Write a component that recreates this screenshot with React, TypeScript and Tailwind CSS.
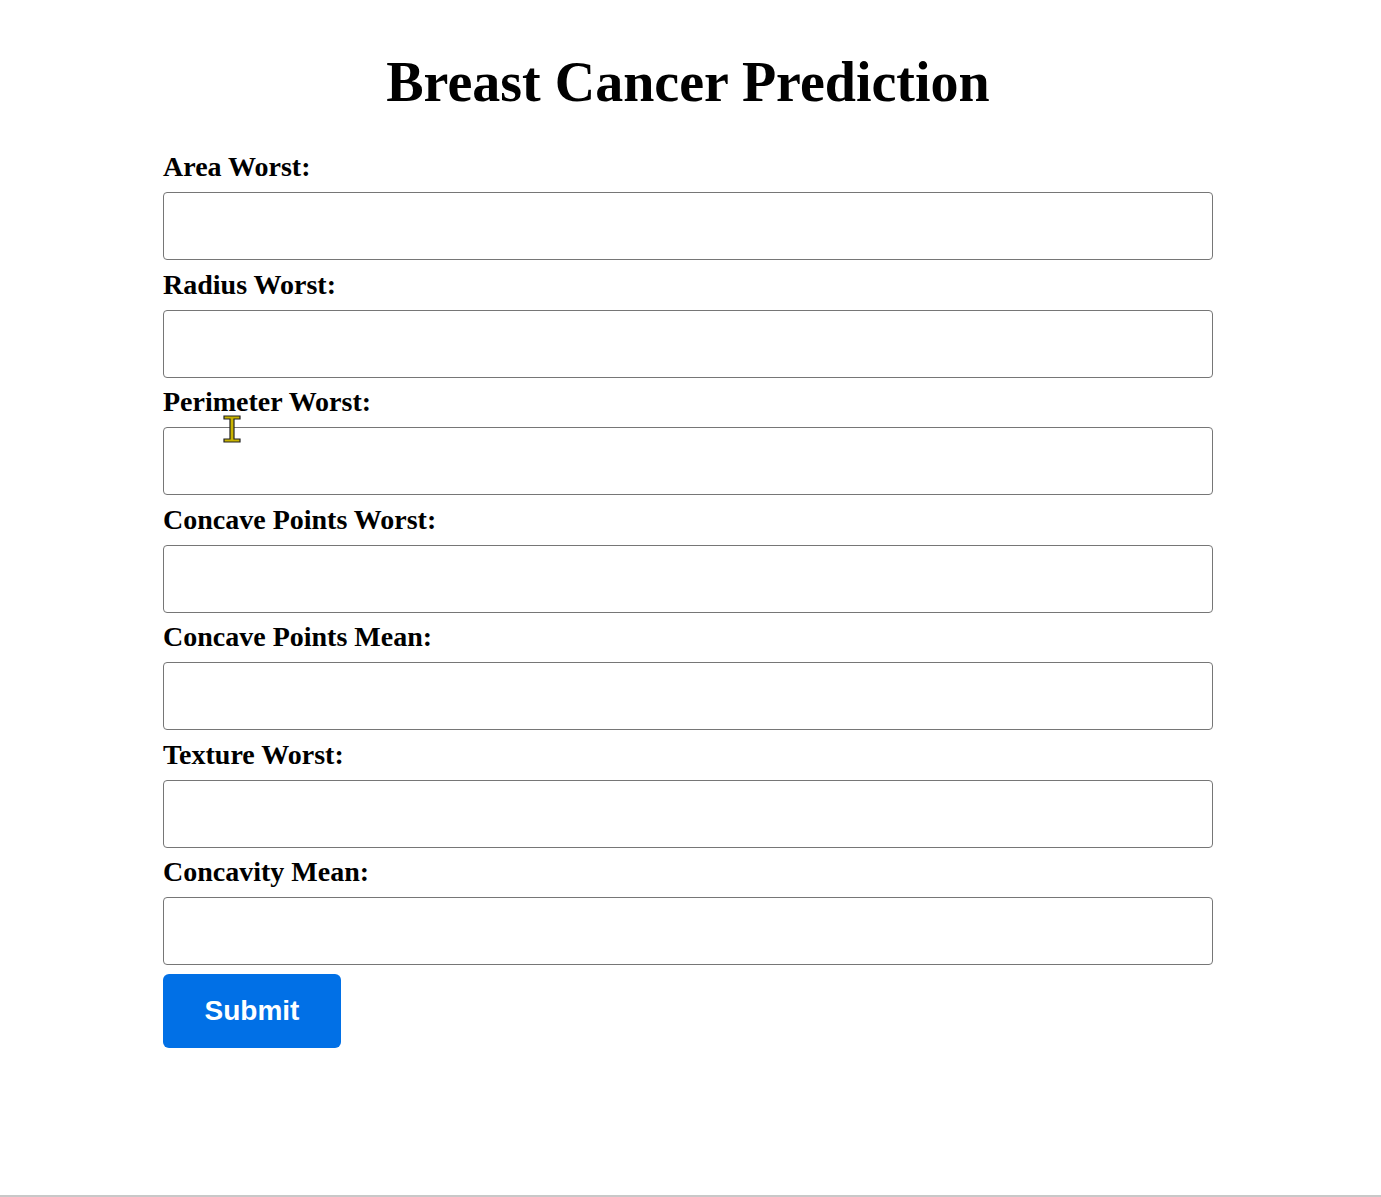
import React from "react";

const fields = [
  "Area Worst:",
  "Radius Worst:",
  "Perimeter Worst:",
  "Concave Points Worst:",
  "Concave Points Mean:",
  "Texture Worst:",
  "Concavity Mean:",
];

function TextCursor() {
  // mouse I-beam left in the capture
  return (
    <svg
      className="absolute left-[223px] top-[415px] pointer-events-none"
      width="18"
      height="28"
      viewBox="0 0 18 28"
    >
      <path
        d="M1 1h16v3h-6v20h6v3H1v-3h6V4H1z"
        fill="#c9b400"
        stroke="#222"
        strokeWidth="1.2"
        strokeLinejoin="miter"
      />
    </svg>
  );
}

export default function App() {
  return (
    <div className="relative w-full h-[1197px] bg-white border-b-2 border-[#c8c8c8] overflow-hidden">
      <div className="w-[1376px] pt-[50px]">
        <div className="mx-auto w-[1050px] flex flex-col">
          <h1 className="text-center text-[56px] leading-[64px] font-bold text-black mb-[37px] font-['Liberation_Serif','Times_New_Roman',serif]">
            Breast Cancer Prediction
          </h1>

          <form className="flex flex-col" onSubmit={(e) => e.preventDefault()}>
            {fields.map((label) => (
              <div key={label} className="flex flex-col mb-[8.5px]">
                <label className="block text-[28px] leading-[32px] font-bold text-black mb-[9px] font-['Liberation_Serif','Times_New_Roman',serif]">
                  {label}
                </label>
                <input
                  type="text"
                  className="h-[68px] w-full border border-[#767676] rounded-[4px] px-3 outline-none bg-white"
                />
              </div>
            ))}
            <button
              type="submit"
              className="w-[178px] h-[74px] rounded-[6px] bg-[#0170e6] text-white text-[28px] font-bold font-['Liberation_Sans',Arial,sans-serif]"
            >
              Submit
            </button>
          </form>
        </div>
      </div>
      <TextCursor />
    </div>
  );
}
